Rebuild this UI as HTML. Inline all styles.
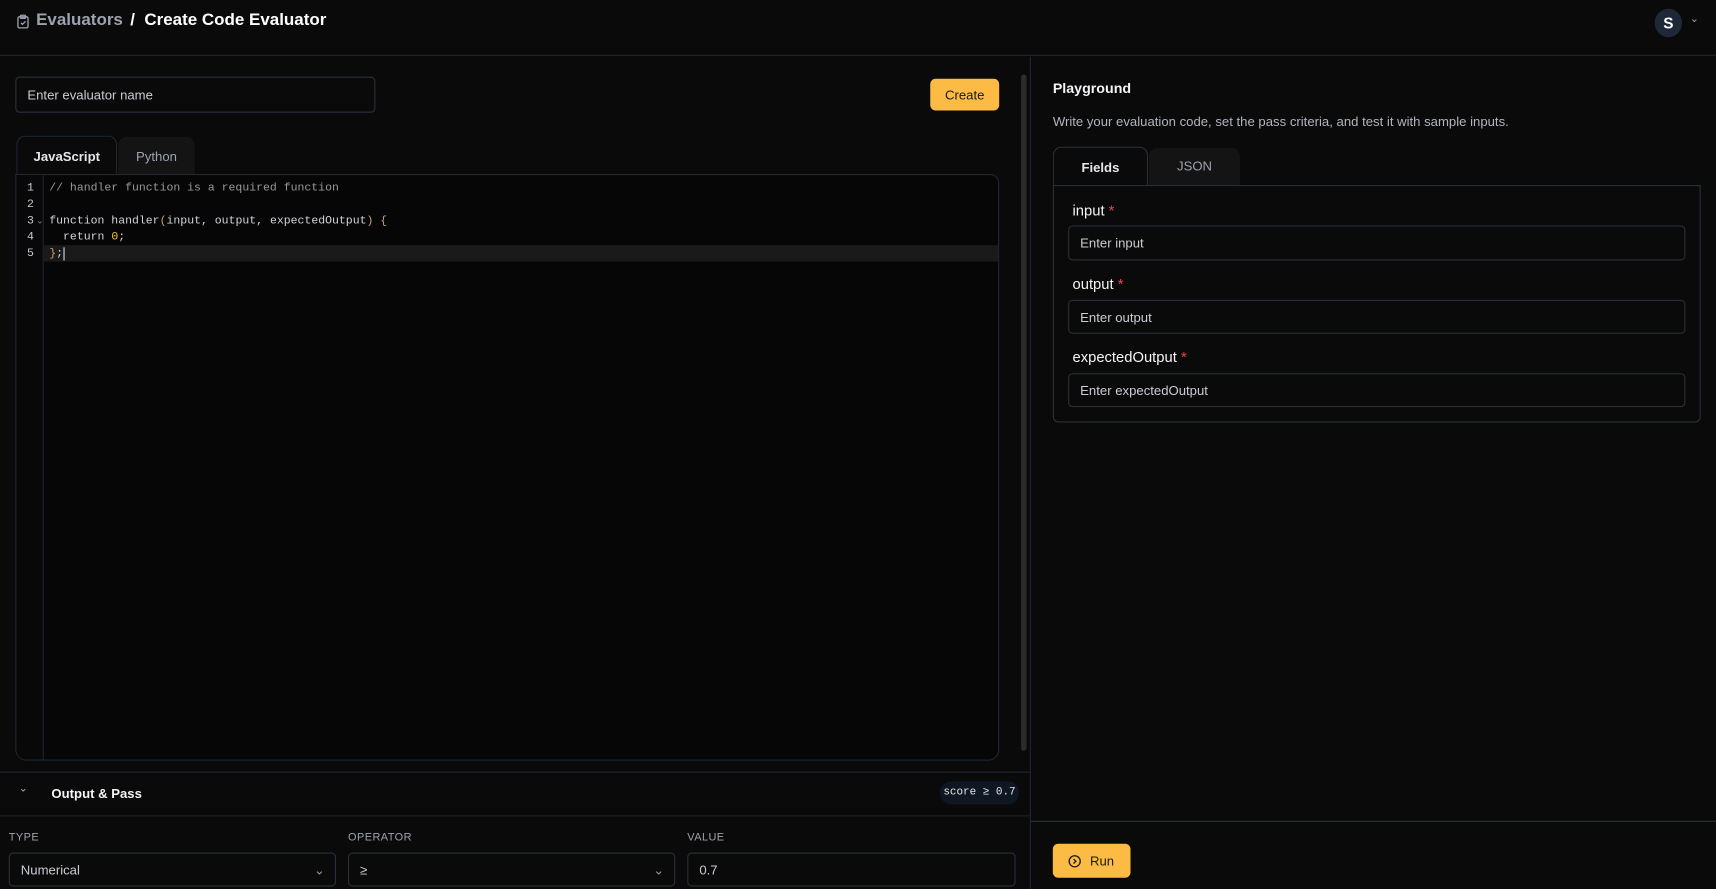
<!DOCTYPE html>
<html><head><style>
*{box-sizing:border-box;margin:0;padding:0}
html,body{width:1716px;height:887px;background:#0a0a0a;overflow:hidden}
#w{position:absolute;left:0;top:0;width:1568px;height:811px;transform:scale(1.0944);transform-origin:0 0;font-family:"Liberation Sans",sans-serif;color:#e5e7eb;font-size:12px}
.a{position:absolute}
.inp{position:absolute;border:1px solid #2a303a;border-radius:4px;background:#0a0a0a;color:#c9cdd3;font-size:12px;padding-left:10px;display:flex;align-items:center}
.mono{font-family:"Liberation Mono",monospace;font-size:10.5px}
.lab{position:absolute;font-size:13.5px;color:#f3f4f6;font-weight:500}
.lab b{color:#ef4444;font-weight:400}
.cap{position:absolute;font-size:10px;color:#9ca3af;letter-spacing:.4px}
</style></head><body><div id="w">
<div class="a" style="left:0;top:0;width:1568px;height:51px;border-bottom:1px solid #1f2733"></div>
<svg class="a" style="left:15px;top:13px" width="12" height="13" viewBox="0 0 13 14" fill="none" stroke="#9ca3af" stroke-width="1.3"><rect x="1.5" y="2.5" width="10" height="11" rx="1.5"/><rect x="4" y="1" width="5" height="3" rx=".8"/><path d="M4.5 8.5l1.5 1.5 3-3"/></svg>
<div class="a" style="left:33px;top:10px;font-size:15.5px;font-weight:bold;color:#9ca3af">Evaluators</div>
<div class="a" style="left:119px;top:10px;font-size:15.5px;font-weight:bold;color:#fff">/&nbsp;&nbsp;Create Code Evaluator</div>
<div class="a" style="left:1512px;top:8px;width:25px;height:26px;border-radius:50%;background:#1e2838;color:#fff;font-weight:bold;font-size:14px;display:flex;align-items:center;justify-content:center">S</div>
<div class="a" style="left:1544px;top:12px;color:#9ca3af;font-size:10px">&#8964;</div>

<div class="a" style="left:941px;top:52px;width:1px;height:760px;background:#1f2733"></div>
<div class="a" style="left:933px;top:68px;width:5px;height:618px;background:#2b2b2b;border-radius:3px"></div>

<div class="inp" style="left:14px;top:70px;width:329px;height:33px">Enter evaluator name</div>
<div class="a" style="left:850px;top:72px;width:63px;height:29px;background:#fbbb45;border-radius:5px;color:#1a1a1a;font-size:12px;display:flex;align-items:center;justify-content:center">Create</div>

<div class="a" style="left:15px;top:124px;width:92px;height:37px;border:1px solid #1f2733;border-bottom:none;border-radius:8px 8px 0 0;background:#0a0a0a;font-size:12px;font-weight:bold;color:#e5e7eb;display:flex;align-items:center;justify-content:center">JavaScript</div>
<div class="a" style="left:108px;top:125px;width:70px;height:35px;background:#141414;border-radius:8px 8px 0 0;color:#9ca3af;display:flex;align-items:center;justify-content:center">Python</div>
<div class="a" style="left:14px;top:159px;width:899px;height:536px;border:1px solid #1f2733;border-radius:0 8px 10px 10px;background:#060606;overflow:hidden">
 <div class="a" style="left:0;top:0;width:25px;height:100%;border-right:1px solid #1f2733;background:#080808"></div>
 <div class="a" style="left:25px;top:64px;width:880px;height:15px;background:#1a1a1a"></div>
 <div class="a mono" style="left:0;top:5px;width:16px;text-align:right;line-height:15px;color:#c9cdd3">1<br>2<br>3<br>4<br>5</div>
 <div class="a" style="left:18px;top:37px;color:#888;font-size:8px">&#8964;</div>
 <div class="a mono" style="left:30px;top:5px;line-height:15px;color:#d1d5db;white-space:pre"><span style="color:#9a9a9a">// handler function is a required function</span>

function handler<span style="color:#c9a26b">(</span>input, output, expectedOutput<span style="color:#c9a26b">)</span> <span style="color:#c9a26b">{</span>
  return <span style="color:#f5c542">0</span>;
<span style="color:#c9a26b">}</span>;<span style="border-left:1px solid #ddd"></span></div>
</div>

<div class="a" style="left:0;top:705px;width:941px;height:1px;background:#1f2733"></div>
<div class="a" style="left:17px;top:715px;color:#aaa;font-size:10px">&#8964;</div>
<div class="a" style="left:47px;top:718px;font-size:12px;font-weight:bold;color:#f3f4f6">Output &amp; Pass</div>
<div class="a mono" style="left:859px;top:714px;width:72px;height:21px;border-radius:10px;background:#0f1722;color:#e5e7eb;font-size:10px;display:flex;align-items:center;justify-content:center">score ≥ 0.7</div>
<div class="a" style="left:0;top:745px;width:941px;height:1px;background:#1f1f1f"></div>
<div class="cap" style="left:8px;top:760px">TYPE</div>
<div class="cap" style="left:318px;top:760px">OPERATOR</div>
<div class="cap" style="left:628px;top:760px">VALUE</div>
<div class="inp" style="left:8px;top:779px;width:299px;height:31px;padding-left:10px">Numerical<span style="position:absolute;right:9px;color:#999">&#8964;</span></div>
<div class="inp" style="left:318px;top:779px;width:299px;height:31px;padding-left:10px">≥<span style="position:absolute;right:9px;color:#999">&#8964;</span></div>
<div class="inp" style="left:628px;top:779px;width:300px;height:31px;padding-left:10px">0.7</div>

<div class="a" style="left:962px;top:73px;font-size:13px;font-weight:bold;color:#f3f4f6">Playground</div>
<div class="a" style="left:962px;top:104px;font-size:12px;color:#b0b5bd">Write your evaluation code, set the pass criteria, and test it with sample inputs.</div>
<div class="a" style="left:962px;top:134px;width:87px;height:36px;border:1px solid #2a303a;border-bottom:none;border-radius:8px 8px 0 0;background:#0a0a0a;font-weight:bold;display:flex;align-items:center;justify-content:center">Fields</div>
<div class="a" style="left:1050px;top:135px;width:83px;height:34px;background:#141414;border-radius:8px 8px 0 0;color:#9ca3af;display:flex;align-items:center;justify-content:center">JSON</div>
<div class="a" style="left:962px;top:169px;width:592px;height:217px;border:1px solid #2a303a;border-radius:0 0 5px 5px"></div>
<div class="lab" style="left:980px;top:185px">input <b>*</b></div>
<div class="inp" style="left:976px;top:206px;width:564px;height:32px">Enter input</div>
<div class="lab" style="left:980px;top:252px">output <b>*</b></div>
<div class="inp" style="left:976px;top:274px;width:564px;height:31px">Enter output</div>
<div class="lab" style="left:980px;top:319px">expectedOutput <b>*</b></div>
<div class="inp" style="left:976px;top:341px;width:564px;height:31px">Enter expectedOutput</div>

<div class="a" style="left:942px;top:750px;width:626px;height:1px;background:#2a303a"></div>
<div class="a" style="left:962px;top:771px;width:71px;height:31px;background:#fbbb45;border-radius:5px;color:#1a1a1a;font-size:12px;display:flex;align-items:center;padding-left:14px">
<svg width="12" height="12" viewBox="0 0 13 13" fill="none" stroke="#1a1a1a" stroke-width="1.3"><circle cx="6.5" cy="6.5" r="5.5"/><path d="M5.3 4.3l2.4 2.2-2.4 2.2"/></svg><span style="margin-left:8px">Run</span></div>
</div></body></html>
